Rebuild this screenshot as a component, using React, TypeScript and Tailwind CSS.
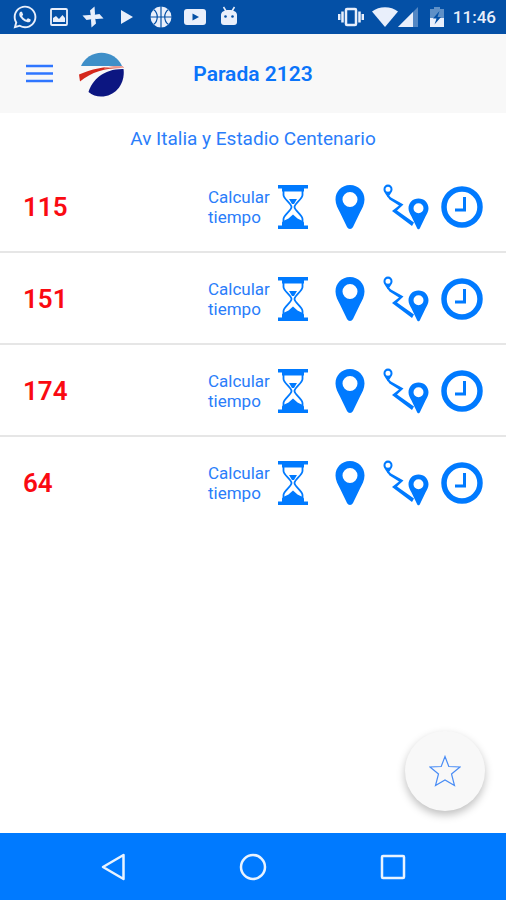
import { FaWhatsapp } from "react-icons/fa";

const lines = ["115", "151", "174", "64"];

function PinwheelIcon() {
  return (
    <svg viewBox="0 0 24 24" className="w-6 h-6" fill="currentColor">
      {[0, 90, 180, 270].map((angle) => (
        <path key={angle} d="M10 12 9 5.500 13.500 1.500 14 8.500 13.500 12Z" transform={`rotate(${angle} 12 12)`} />
      ))}
    </svg>
  );
}

function BasketballIcon() {
  return (
    <svg viewBox="0 0 22 22" className="w-[22px] h-[22px]">
      <circle cx="11" cy="11" r="10.5" fill="#e9effb" />
      <g fill="none" stroke="#0450a6" strokeWidth="1.2">
        <path d="M11 0v22M0 11h22M3.5 3.5c5 3.5 5 11.5 0 15M18.500 3.500c-5 3.500-5 11.500 0 15" />
      </g>
    </svg>
  );
}

function AndroidIcon() {
  return (
    <svg viewBox="0 0 18 22" className="w-[18px] h-[22px]">
      <path d="M3.500 1 6 5M14.500 1 12 5" stroke="#e9effb" strokeWidth="1.500" />
      <path d="M1 9c0-3 3-5 8-5s8 2 8 5v7c0 2-1 3-3 3H4c-2 0-3-1-3-3Z" fill="#e9effb" />
      <circle cx="5.500" cy="10.500" r="1.300" fill="#0450a6" />
      <circle cx="12.500" cy="10.500" r="1.300" fill="#0450a6" />
    </svg>
  );
}

function StatusBar() {
  return (
    <div className="flex h-[34px] items-center justify-between bg-[#0450a6] pl-2 pr-[10px] text-[#e9effb]">
      <div className="flex items-center">
        <span className="flex w-[34px] justify-center">
          <FaWhatsapp className="w-[26px] h-[26px]" />
        </span>
        <span className="flex w-[34px] justify-center">
          <svg viewBox="0 0 18 18" className="w-[18px] h-[18px]">
            <rect x="1" y="1" width="16" height="16" rx="1" fill="none" stroke="currentColor" strokeWidth="1.800" />
            <path d="M3 14V10l3-2 3 3L12.500 7 15 10v4Z" fill="currentColor" />
          </svg>
        </span>
        <span className="flex w-[34px] justify-center">
          <PinwheelIcon />
        </span>
        <span className="flex w-[34px] justify-center">
          <svg viewBox="0 0 12 14" className="w-3 h-[14px]" fill="currentColor">
            <path d="M0 0 12 7 0 14Z" />
          </svg>
        </span>
        <span className="flex w-[34px] justify-center">
          <BasketballIcon />
        </span>
        <span className="flex w-[34px] justify-center">
          <svg viewBox="0 0 22 16" className="w-[22px] h-4">
            <rect width="22" height="16" rx="3" fill="currentColor" />
            <path d="M8.500 4.500 15 8l-6.500 3.500Z" fill="#0450a6" />
          </svg>
        </span>
        <span className="flex w-[34px] justify-center">
          <AndroidIcon />
        </span>
      </div>

      <div className="flex items-center">
        {/* Vibrate */}
        <svg viewBox="0 0 26 20" className="w-[26px] h-5">
          <rect x="8" y="2" width="10" height="16" rx="1" fill="none" stroke="currentColor" strokeWidth="2.500" />
          <path d="M1.200 7v6M4.500 4.500v11M21.500 4.500v11M24.800 7v6" stroke="currentColor" strokeWidth="2.500" />
        </svg>
        {/* Wifi */}
        <svg viewBox="0 0 26 20" className="ml-2 w-[26px] h-5" fill="currentColor">
          <path d="M0 4.500C7-1.300 19-1.300 26 4.500L13 20Z" />
        </svg>
        {/* Mobile signal */}
        <svg viewBox="0 0 20 20" className="w-5 h-5" fill="currentColor">
          <path d="M0 20 20 0v20Z" opacity=".35" />
          <path d="M0 20 15 5v15Z" />
        </svg>
        {/* Battery */}
        <svg viewBox="0 0 14 20" className="ml-3 w-[14px] h-5">
          <path d="M4 0h6v2h4v18H0V2h4Z" fill="currentColor" opacity=".4" />
          <path d="M0 11h14v9H0Z" fill="currentColor" />
          <path d="M9.500 4 3 11.500h3.500L4.500 17.500 11 10H7.500Z" fill="#0450a6" />
        </svg>
        <span className="ml-[9px] text-[17px] font-medium leading-5">11:46</span>
      </div>
    </div>
  );
}

function Logo() {
  return (
    <svg viewBox="0 0 46 46" className="w-[46px] h-[46px]">
      <path d="M2 15A22.500 22.500 0 0 1 43 15Z" fill="#3f8fc8" />
      <path d="M0 23.500C13 17.500 28 15 44 15.500L44.500 17C28 16.500 13 20.500 1 30.500Z" fill="#d5281c" />
      <path d="M26 16.500C32 15.500 38 15.300 44 15.500V17C38 16.600 32 16.600 25 17.500Z" fill="#f2b5aa" />
      <path d="M44.500 18C46.500 32 37 45.500 22 45.500 17.500 45.500 13 44 9.500 41 13 29 25 17.500 44.500 18Z" fill="#0c1681" />
    </svg>
  );
}

function Header() {
  return (
    <header className="grid h-[79px] grid-cols-[1fr_auto_1fr] items-center bg-[#f8f8f8] px-[26px]">
      <div className="flex items-center gap-[26px]">
        <button type="button" aria-label="Menu">
          <svg viewBox="0 0 27 19" className="w-[27px] h-[19px]" stroke="#2f76ff" strokeWidth="2.500">
            <path d="M0 2h27M0 9.500h27M0 17h27" />
          </svg>
        </button>
        <Logo />
      </div>
      <h1 className="text-[21px] font-semibold leading-6">Parada 2123</h1>
    </header>
  );
}

function HourglassIcon() {
  return (
    <svg viewBox="0 0 30 44" className="w-[30px] h-11">
      <path d="M0 0h30v3.500H0ZM0 40.500h30V44H0Z" fill="currentColor" />
      <path d="M4 3h22v3.500H4Z" fill="currentColor" />
      <path
        d="M5.500 4v6c0 4 8 8.500 8 12s-8 8-8 12v6M24.500 4v6c0 4-8 8.500-8 12s8 8 8 12v6"
        fill="none"
        stroke="currentColor"
        strokeWidth="1.800"
      />
      <path d="M11 14h8l-3 5h-2Z" fill="currentColor" />
      <path d="M4 41v-3c0-2 4-3 6.500-4.500L15 29.500l4.500 4C22 35 26 36 26 38v3Z" fill="currentColor" />
    </svg>
  );
}

function PinIcon() {
  return (
    <svg viewBox="0 0 30 44" className="w-[30px] h-11">
      <path
        fillRule="evenodd"
        d="M15 0C6.500 0 .500 6.500.500 14.500c0 5 2.500 9 4.500 13l7 14.500c1.300 2.600 4.700 2.600 6 0l7-14.500c2-4 4.500-8 4.500-13C29.500 6.500 23.500 0 15 0Zm0 7a7.500 7.500 0 1 1 0 15 7.500 7.500 0 0 1 0-15Z"
        fill="currentColor"
      />
    </svg>
  );
}

function RouteIcon() {
  return (
    <svg viewBox="0 0 46 46" className="w-[46px] h-[46px]">
      <g fill="currentColor" fillRule="evenodd">
        <path d="M5 .500a4.500 4.500 0 0 0-4.500 4.700C.500 7.500 2 9 5 13.500 8 9 9.500 7.500 9.500 5.200A4.500 4.500 0 0 0 5 .500Zm0 2.200a2.500 2.500 0 1 1 0 5 2.500 2.500 0 0 1 0-5Z" />
        <path d="M35.500 14.500c-5.700 0-10 4.200-10 9.800 0 3 1.500 5.500 3 8.200L34 44c.6 1.700 2.400 1.700 3 0l5.500-11.500c1.500-2.700 3-5.200 3-8.200 0-5.600-4.300-9.800-10-9.800Zm0 4.800a5 5 0 1 1 0 10 5 5 0 0 1 0-10Z" />
        <path d="M5.500 11 8 13.500 20.500 20.500 14 26.500 31 38.500 29 42 9 27 16 21.500 6.500 15.500 4 12Z" />
      </g>
    </svg>
  );
}

function ClockIcon() {
  return (
    <svg viewBox="0 0 42 42" className="w-[42px] h-[42px]" fill="none" stroke="currentColor">
      <circle cx="21" cy="21" r="18" strokeWidth="5.500" />
      <path d="M23.500 11v13h-9.500" strokeWidth="3" />
    </svg>
  );
}

function LineRow({ line }: { line: string }) {
  return (
    <li className="flex h-[92px] items-center border-b-2 border-[#e6e6e6] px-[23px] pt-[2px] last:border-transparent">
      <span className="flex-1 text-[26px] font-semibold leading-8 text-[#fa0a12]">{line}</span>
      <button type="button" className="flex items-center gap-2 text-left text-[#007aff]">
        <span className="w-[62px] text-[17px] leading-5 text-[#2a7dfa]">Calcular tiempo</span>
        <HourglassIcon />
      </button>
      <button type="button" aria-label={`Ubicación ${line}`} className="ml-[27px] text-[#007aff]">
        <PinIcon />
      </button>
      <button type="button" aria-label={`Recorrido ${line}`} className="ml-[18px] text-[#007aff]">
        <RouteIcon />
      </button>
      <button type="button" aria-label={`Horarios ${line}`} className="ml-3 text-[#007aff]">
        <ClockIcon />
      </button>
    </li>
  );
}

function NavBar() {
  return (
    <nav className="grid h-[67px] grid-cols-3 items-center bg-[#007aff] px-[43px] text-[#e9f3ff]">
      <button type="button" aria-label="Atrás" className="flex justify-center">
        <svg viewBox="0 0 26 28" className="w-[26px] h-7" fill="none" stroke="currentColor" strokeWidth="2.500" strokeLinejoin="round">
          <path d="M23.500 2v24L3 14Z" />
        </svg>
      </button>
      <button type="button" aria-label="Inicio" className="flex justify-center">
        <svg viewBox="0 0 28 28" className="w-7 h-7" fill="none" stroke="currentColor" strokeWidth="2.500">
          <circle cx="14" cy="14" r="12" />
        </svg>
      </button>
      <button type="button" aria-label="Recientes" className="flex justify-center">
        <svg viewBox="0 0 26 26" className="w-[26px] h-[26px]" fill="none" stroke="currentColor" strokeWidth="2.500">
          <rect x="2" y="2" width="22" height="22" rx="1" />
        </svg>
      </button>
    </nav>
  );
}

export default function App() {
  return (
    <div className="flex min-h-screen flex-col bg-white font-['Roboto',sans-serif] text-[#0a74fa]">
      <StatusBar />
      <Header />
      <main className="relative flex-1">
        <p className="pt-[14px] pb-[10px] text-center text-[19px] leading-6 text-[#2a7dfa]">Av Italia y Estadio Centenario</p>
        <ul>
          {lines.map((line) => (
            <LineRow key={line} line={line} />
          ))}
        </ul>
        <button
          type="button"
          aria-label="Agregar a favoritos"
          className="absolute bottom-[22px] right-[21px] flex h-20 w-20 items-center justify-center rounded-full bg-[#f8f8f8] shadow-[0_4px_8px_rgba(0,0,0,0.25)]"
        >
          <svg viewBox="0 0 32 32" className="w-8 h-8" fill="none" stroke="#4a8df5" strokeWidth="1.200">
            <path d="M16 1.500 19.800 11.500 31 12l-8.500 7L25.500 30.500 16 25l-9.500 5.500 3-11.500L1 12l11.200-.5Z" />
          </svg>
        </button>
      </main>
      <NavBar />
    </div>
  );
}
